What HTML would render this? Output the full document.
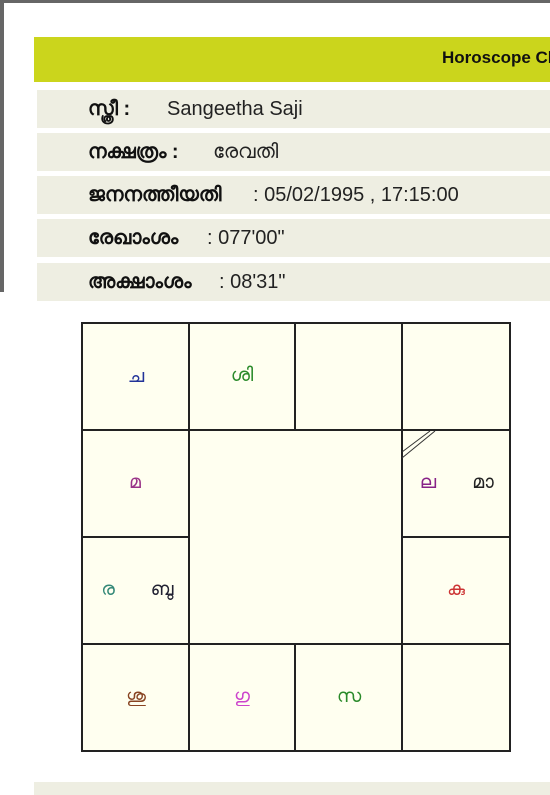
<!DOCTYPE html><html><head><meta charset="utf-8"><style>
body{margin:0;width:550px;height:795px;background:#fff;position:relative;overflow:hidden;font-family:"Liberation Sans",sans-serif}
.a{position:absolute}
.row{position:absolute;left:37px;width:513px;height:38px;background:#eeeee2;font-size:20px;color:#222;line-height:38px;overflow:hidden}
.row b{position:absolute;left:51px;font-weight:bold;color:#111}
.row span{position:absolute;white-space:nowrap}
.t{position:absolute;font-size:19px;transform:translate(-50%,-50%);white-space:nowrap}
</style></head><body>
<div class="a" style="left:0;top:0;width:550px;height:3px;background:#666"></div>
<div class="a" style="left:0;top:0;width:4px;height:292px;background:#666"></div>
<div class="a" style="left:34px;top:37px;width:516px;height:45px;background:#cbd51c;overflow:hidden"><div class="a" style="left:408px;top:11px;font-size:17px;font-weight:bold;color:#111;white-space:nowrap">Horoscope Chart</div></div>
<div class="row" style="top:90px"><b>സ്ത്രീ :</b><span style="left:130px">Sangeetha Saji</span></div>
<div class="row" style="top:133px"><b>നക്ഷത്രം :</b><span style="left:176px">രേവതി</span></div>
<div class="row" style="top:176px"><b>ജനനത്തീയതി</b><span style="left:216px">: 05/02/1995 , 17:15:00</span></div>
<div class="row" style="top:219px"><b>രേഖാംശം</b><span style="left:170px">: 077'00"</span></div>
<div class="row" style="top:263px"><b>അക്ഷാംശം</b><span style="left:182px">: 08'31"</span></div>
<svg class="a" style="left:80px;top:321px" width="434" height="434">
<rect x="2" y="2" width="428" height="428" fill="#fffff0" stroke="#222" stroke-width="2"/>
<g stroke="#222" stroke-width="2">
<line x1="109" y1="2" x2="109" y2="430"/><line x1="322" y1="2" x2="322" y2="430"/>
<line x1="215" y1="2" x2="215" y2="109"/><line x1="215" y1="323" x2="215" y2="430"/>
<line x1="2" y1="109" x2="430" y2="109"/><line x1="2" y1="323" x2="430" y2="323"/>
<line x1="2" y1="216" x2="109" y2="216"/><line x1="322" y1="216" x2="430" y2="216"/>
</g>
<g stroke="#333" stroke-width="1"><line x1="322" y1="131" x2="350" y2="110"/><line x1="322" y1="137" x2="355" y2="110"/></g>
</svg>
<div class="t" style="left:136px;top:377px;color:#223399">ച</div>
<div class="t" style="left:242px;top:376px;color:#2a8a2a">ശി</div>
<div class="t" style="left:135px;top:483px;color:#993388">മ</div>
<div class="t" style="left:428px;top:483px;color:#882288">ല</div>
<div class="t" style="left:483px;top:483px;color:#222">മാ</div>
<div class="t" style="left:108px;top:590px;color:#338877">ര</div>
<div class="t" style="left:162px;top:590px;color:#223">ബു</div>
<div class="t" style="left:456px;top:590px;color:#cc3333">കു</div>
<div class="t" style="left:136px;top:697px;color:#884422">ശു</div>
<div class="t" style="left:242px;top:697px;color:#cc44cc">ഗു</div>
<div class="t" style="left:349px;top:697px;color:#2a8a2a">സ</div>
<div class="a" style="left:34px;top:782px;width:516px;height:13px;background:#eeeee2"></div>
</body></html>
